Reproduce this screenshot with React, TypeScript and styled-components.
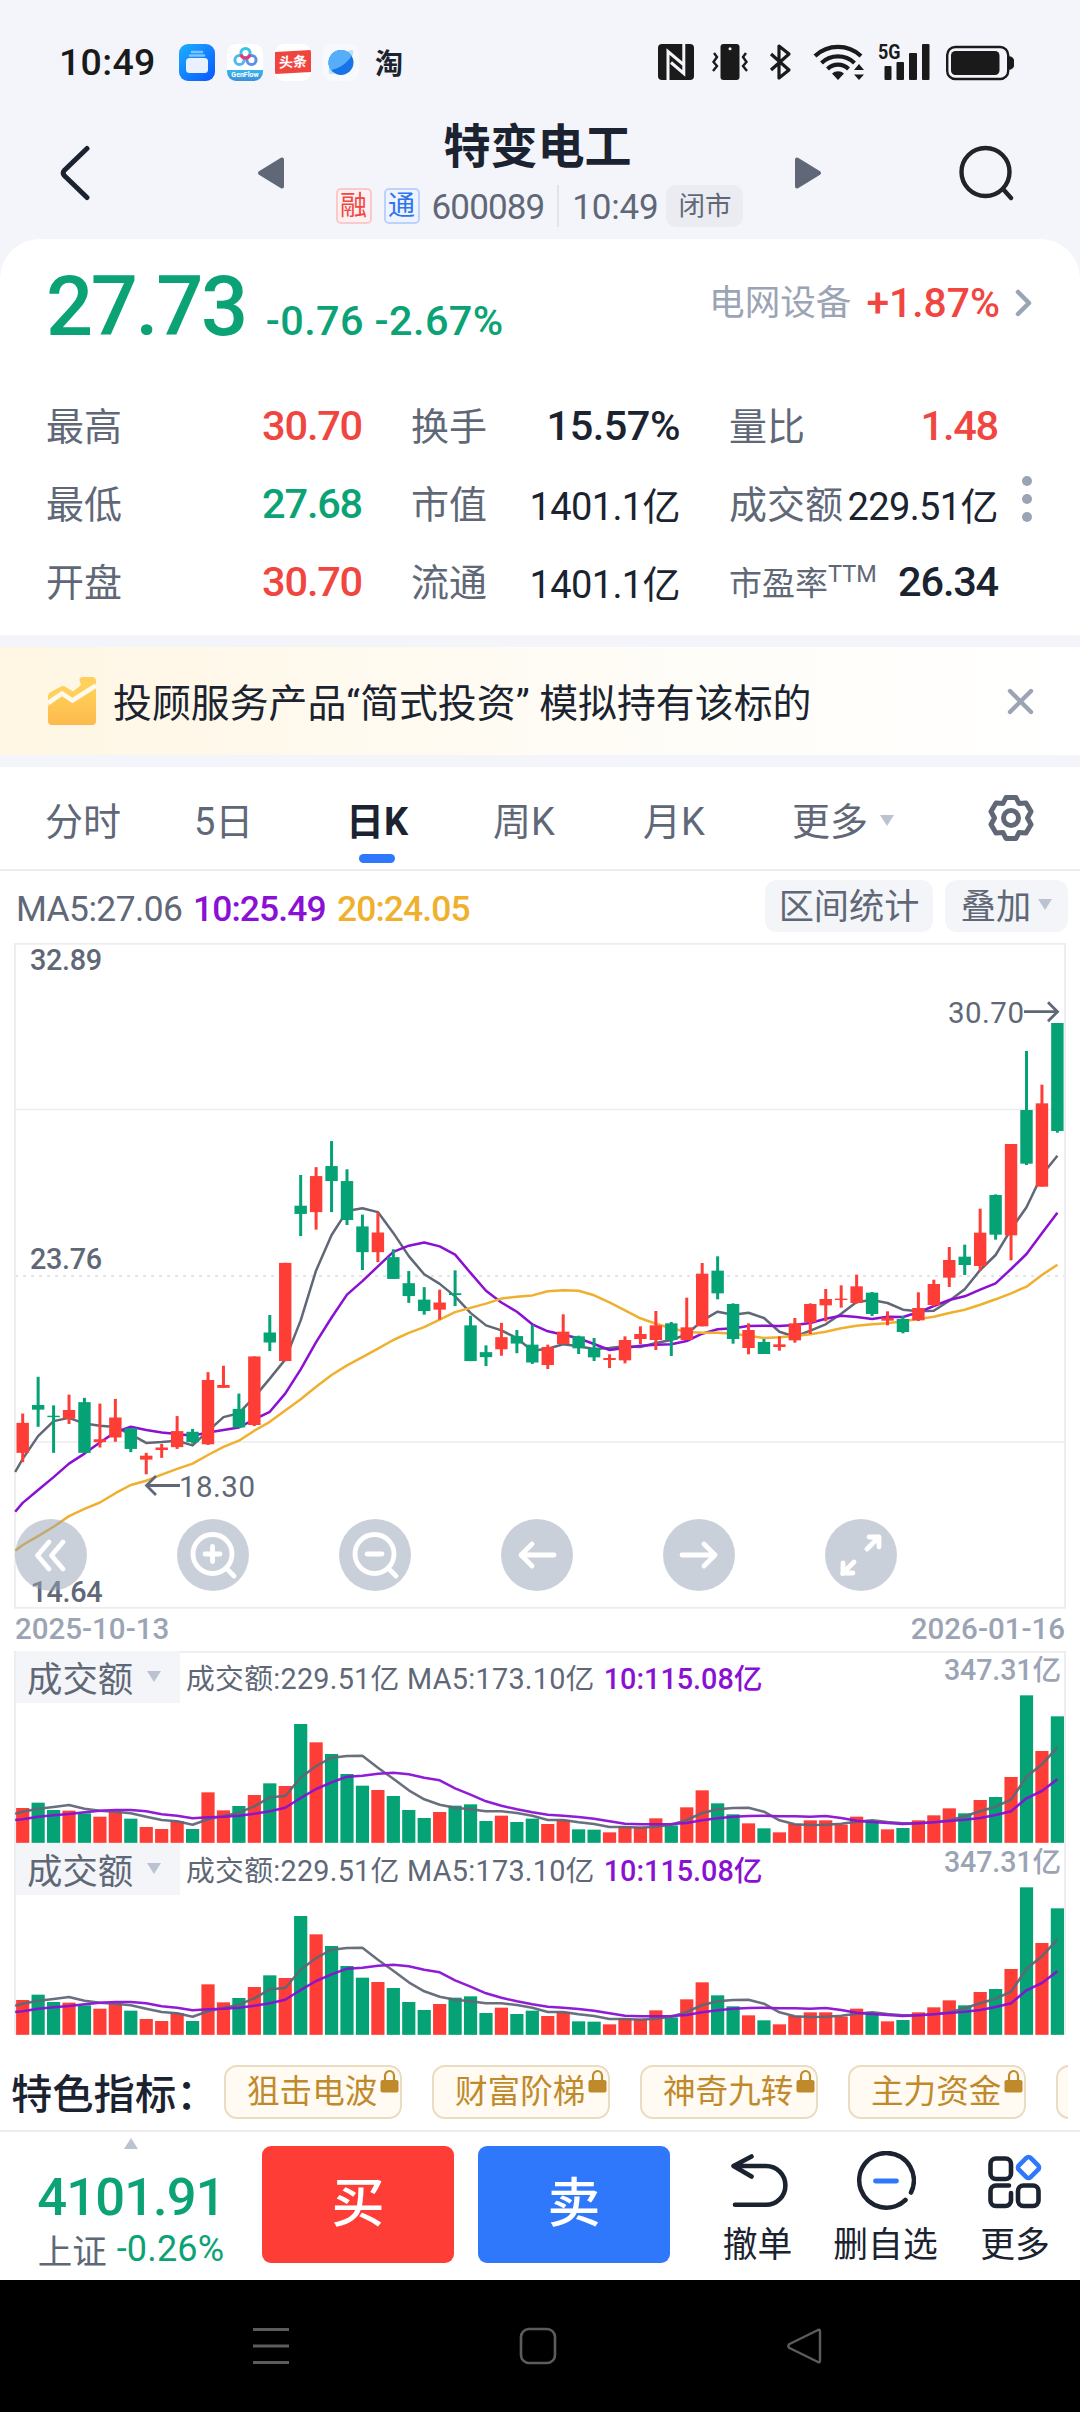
import React from 'react';
import styled, { createGlobalStyle } from 'styled-components';

const C = {
  ink: '#1b2330',
  sub: '#606877',
  mute: '#9ba4b5',
  up: '#ff3d37',
  upText: '#f0463f',
  down: '#04a275',
  downText: '#0ba276',
  purple: '#8a10d4',
  amber: '#efb02e',
  blue: '#2f78fb',
  line: '#ededef',
  page: '#f4f5fa',
  gold: '#bf8a2c',
};

const Global = createGlobalStyle`
  * { box-sizing: border-box; }
  body {
    margin: 0;
    background: #000;
    font-family: Roboto, "Noto Sans CJK SC", sans-serif;
    color: ${C.ink};
  }
  svg { display: block; flex: none; }
`;

const Screen = styled.div`
  width: 1080px;
  height: 2412px;
  display: flex;
  flex-direction: column;
  background: ${C.page};
  overflow: hidden;
  white-space: nowrap;
`;

const Txt = styled.span<{ $s: number; $c?: string; $w?: number; $ls?: number }>`
  font-size: ${p => p.$s}px;
  color: ${p => p.$c ?? C.ink};
  font-weight: ${p => p.$w ?? 400};
  letter-spacing: ${p => p.$ls ?? 0}px;
`;

/* ---------- status bar ---------- */

const StatusBar = styled.header`
  height: 124px;
  flex: none;
  display: flex;
  align-items: center;
  padding: 0 66px 0 59px;
`;
const Clock = styled.span`
  width: 120px;
  font-size: 37.5px;
  font-weight: 500;
  letter-spacing: 0.3px;
  color: #1a1a1a;
`;
const AppIcons = styled.div`
  display: flex;
  gap: 12px;
  align-items: center;
`;
const AppTile = styled.div<{ $bg?: string }>`
  width: 36px;
  height: 37px;
  border-radius: 9px;
  overflow: hidden;
  background: ${p => p.$bg ?? 'transparent'};
  display: flex;
  flex-direction: column;
  align-items: center;
  justify-content: center;
`;
const Ribbon = styled.div`
  width: 36px;
  height: 22px;
  background: #f0443f;
  color: #fff;
  font-size: 14px;
  font-weight: 700;
  line-height: 22px;
  text-align: center;
  transform: skewY(-3deg);
`;
const FlowLabel = styled.div`
  width: 36px;
  height: 11px;
  background: linear-gradient(#35b6ee, #3f8fd9);
  color: #fff;
  font-size: 7px;
  font-weight: 700;
  line-height: 11px;
  text-align: center;
`;
const TaoMark = styled.span`
  margin-left: 4px;
  font-size: 28px;
  font-weight: 700;
`;
const SysIcons = styled.div`
  margin-left: auto;
  display: flex;
  align-items: center;
`;

const SystemGlyphs = () => (
  <svg width="356" height="64" viewBox="658 30 356 64">
    <g fill="#1a1a1a">
      <rect x="658" y="44" width="36" height="36" rx="4" />
      <path d="M668 80V51.500L684 65M683.800 44V73.500L671 62.500" fill="none" stroke="#f4f5fa" strokeWidth="3" />
      <rect x="720.500" y="44" width="19" height="36" rx="3" />
      <circle cx="730" cy="48.800" r="1.500" fill="#f4f5fa" />
      <path d="M714 53l3 4-3.500 5 3.500 4-4 5M746 53l-3 4 3.500 5-3.500 4 4 5" fill="none" stroke="#1a1a1a" strokeWidth="2.400" />
      <path d="M771 54l18 16-10 8V46l10 8-18 16" fill="none" stroke="#1a1a1a" strokeWidth="3.200" strokeLinejoin="round" />
      <g fill="none" stroke="#1a1a1a" strokeWidth="4.200">
        <path d="M815 56a33.500 33.500 0 0 1 46 0" />
        <path d="M821.500 63a24 24 0 0 1 33 0" />
        <path d="M827.500 69a15 15 0 0 1 21 0" />
      </g>
      <path d="M832 73.500a9 9 0 0 1 12 0L838 80z" />
      <path d="M854 70l5-6 5 6zM854 74.500l5 5.500 5-5.500z" />
      <rect x="884.500" y="66" width="7" height="14" rx="1" />
      <rect x="896.500" y="62" width="7.500" height="18" rx="1" />
      <rect x="909" y="53" width="8" height="27" rx="1" />
      <rect x="922" y="44" width="7.500" height="36" rx="1" />
      <text x="878" y="58.500" fontSize="20" fontWeight="700" fontFamily="Roboto, sans-serif" textLength="22.500" lengthAdjust="spacingAndGlyphs">5G</text>
      <rect x="947.200" y="47" width="61" height="32" rx="8" fill="none" stroke="#1a1a1a" strokeWidth="2.400" />
      <rect x="951" y="51" width="48.500" height="24" rx="4.500" />
      <path d="M1009.500 57a4 5.500 0 0 1 0 12z" stroke="#1a1a1a" strokeWidth="1.500" />
    </g>
  </svg>
);

/* ---------- title bar ---------- */

const TitleBar = styled.div`
  height: 115px;
  flex: none;
  display: flex;
  align-items: flex-start;
  padding: 0 66px 0 60px;
`;
const NavSlot = styled.div<{ $gapRight?: number }>`
  height: 98px;
  display: flex;
  align-items: center;
  margin-right: ${p => p.$gapRight ?? 0}px;
`;
const TitleCol = styled.div`
  flex: 1;
  display: flex;
  flex-direction: column;
  align-items: center;
`;
const Title = styled.h1`
  margin: -1px 4px 0 0;
  font-size: 47px;
  line-height: 47px;
  font-weight: 700;
`;
const SubRow = styled.div`
  margin-top: 15px;
  height: 42px;
  display: flex;
  align-items: center;
`;
const Mark = styled.span<{ $c: string; $edge: string; $bg: string }>`
  width: 36px;
  height: 36px;
  margin-right: 12px;
  border: 2px solid ${p => p.$edge};
  border-radius: 5px;
  background: ${p => p.$bg};
  color: ${p => p.$c};
  font-size: 27px;
  line-height: 32px;
  text-align: center;
`;
const SubNum = styled.span<{ $ls: number }>`
  padding-top: 3px;
  color: ${C.sub};
  font-size: 35px;
  letter-spacing: ${p => p.$ls}px;
`;
const Divider = styled.i`
  width: 2px;
  height: 42px;
  margin: 0 13px 0 13px;
  background: #e2e4ea;
`;
const StatePill = styled.span`
  width: 77px;
  height: 42px;
  margin-left: 8px;
  border-radius: 10px;
  background: #ebecf1;
  color: ${C.sub};
  font-size: 26.500px;
  line-height: 42px;
  text-align: center;
`;

/* ---------- quote card ---------- */

const Card = styled.section`
  height: 396px;
  flex: none;
  padding: 28px 48px 0 46px;
  background: #fff;
  border-radius: 40px 40px 0 0;
`;
const PriceRow = styled.div`
  height: 80px;
  display: flex;
  align-items: baseline;
  line-height: 80px;
`;
const Change = styled.div`
  margin-left: 20px;
`;
const Sector = styled.div`
  margin-left: auto;
  align-self: flex-start;
  display: flex;
  align-items: center;
  line-height: 72px;
  gap: 15px;
`;
const StatGrid = styled.div`
  margin-top: 39px;
  display: flex;
`;
const StatCol = styled.div<{ $w: number; $gap: number }>`
  width: ${p => p.$w}px;
  margin-right: ${p => p.$gap}px;
`;
const StatLine = styled.div`
  height: 78px;
  display: flex;
  justify-content: space-between;
  align-items: center;
`;
const StatLabel = styled.span<{ $small?: boolean }>`
  padding-bottom: ${p => (p.$small ? 1 : 4)}px;
  color: ${C.sub};
  font-size: ${p => (p.$small ? 33 : 38)}px;
`;
const Sup = styled.sup`
  font-size: 23.5px;
  line-height: 0;
  vertical-align: 13px;
`;
const Dots = styled.div`
  align-self: center;
  display: flex;
  flex-direction: column;
  gap: 8px;
  margin-bottom: 8px;
`;
const Dot = styled.i`
  width: 10px;
  height: 10px;
  border-radius: 50%;
  background: ${C.mute};
`;

type Stat = [string, string, string, boolean?];
const statCols: { w: number; gap: number; rows: Stat[] }[] = [
  { w: 316, gap: 49, rows: [['最高', '30.70', C.upText], ['最低', '27.68', C.downText], ['开盘', '30.70', C.upText]] },
  { w: 269, gap: 49, rows: [['换手', '15.57%', C.ink], ['市值', '1401.1亿', C.ink], ['流通', '1401.1亿', C.ink]] },
  { w: 269, gap: 24, rows: [['量比', '1.48', C.upText], ['成交额', '229.51亿', C.ink], ['市盈率', '26.34', C.ink, true]] },
];

const StatItem = ({ row }: { row: Stat }) => {
  const [label, value, color, ttm] = row;
  const wide = value.endsWith('亿');
  return (
    <StatLine>
      <StatLabel $small={ttm}>
        {label}
        {ttm && <Sup>TTM</Sup>}
      </StatLabel>
      <Txt $s={wide ? 38 : 41.5} $w={wide ? 400 : 500} $c={color} $ls={wide ? -0.6 : value.endsWith('%') ? -0.5 : -1.2}>
        {value}
      </Txt>
    </StatLine>
  );
};

/* ---------- banner ---------- */

const Banner = styled.section`
  height: 108px;
  flex: none;
  margin: 12px 0;
  padding: 0 46px 0 48px;
  display: flex;
  align-items: center;
  background: linear-gradient(90deg, #fff6e3, #fffcf5 50%, #fff);
`;
const BannerText = styled.p`
  flex: 1;
  margin: -3px 0 0 17px;
  font-size: 38.9px;
`;

/* ---------- tabs ---------- */

const Tabs = styled.nav`
  height: 104px;
  flex: none;
  display: flex;
  align-items: center;
  padding: 7px 44px 0 45px;
  background: #fff;
  border-bottom: 2px solid ${C.line};
`;
const Tab = styled.div<{ $w: number; $on?: boolean }>`
  position: relative;
  width: ${p => p.$w}px;
  display: flex;
  align-items: center;
  font-size: 38px;
  line-height: 50px;
  color: ${p => (p.$on ? C.ink : C.sub)};
  font-weight: ${p => (p.$on ? 700 : 400)};
  &::after {
    content: '';
    display: ${p => (p.$on ? 'block' : 'none')};
    position: absolute;
    left: 13px;
    top: 57px;
    width: 36px;
    height: 9px;
    border-radius: 4.5px;
    background: ${C.blue};
  }
`;
const Gear = styled.svg`
  margin-top: -8px;
`;
const Caret = styled.i<{ $up?: boolean; $ml?: number; $mt?: number }>`
  width: 0;
  height: 0;
  margin-left: ${p => p.$ml ?? 0}px;
  margin-top: ${p => p.$mt ?? 0}px;
  border: 7px solid transparent;
  border-${p => (p.$up ? 'top' : 'bottom')}-width: 0;
  border-${p => (p.$up ? 'bottom' : 'top')}: 11px solid #bcc3d0;
`;

/* ---------- chart ---------- */

const ChartArea = styled.section`
  flex: none;
  background: #fff;
`;
const MaRow = styled.div`
  height: 72px;
  display: flex;
  align-items: center;
  padding: 0 12px 2px 16px;
  font-size: 35.4px;
`;
const MaItem = styled.span<{ $c: string; $w?: number; $ls: number; $box: number }>`
  width: ${p => p.$box}px;
  padding-top: 5px;
  color: ${p => p.$c};
  font-weight: ${p => p.$w ?? 500};
  letter-spacing: ${p => p.$ls}px;
`;
const ToolBtn = styled.button<{ $w: number; $push?: boolean }>`
  width: ${p => p.$w}px;
  height: 52px;
  margin-left: ${p => (p.$push ? 'auto' : '12px')};
  padding: 2px 0 0;
  display: flex;
  align-items: center;
  justify-content: center;
  border: 0;
  border-radius: 12px;
  background: #f4f5f8;
  color: ${C.sub};
  font: 400 35.2px/50px Roboto, 'Noto Sans CJK SC', sans-serif;
`;
const KlineBox = styled.div`
  position: relative;
  height: 666px;
`;
const Controls = styled.div`
  position: absolute;
  left: 15px;
  bottom: 18px;
  display: flex;
  gap: 90px;
`;
const RoundBtn = styled.div`
  width: 72px;
  height: 72px;
  border-radius: 50%;
  background: rgba(150, 161, 181, 0.5);
`;
const DateRow = styled.div`
  height: 42px;
  padding: 0 15px 3px 15px;
  display: flex;
  justify-content: space-between;
  align-items: center;
  font-size: 29.5px;
  letter-spacing: 0;
  color: ${C.mute};
  font-weight: 500;
`;
const VolBox = styled.div`
  position: relative;
  height: 192px;
  display: flex;
  align-items: flex-start;
  padding-left: 16px;
`;
const VolSvg = styled.svg`
  position: absolute;
  left: 0;
  top: 0;
`;
const VolPick = styled.div`
  position: relative;
  width: 164px;
  height: 52px;
  padding: 0 0 2px 11px;
  display: flex;
  align-items: center;
  background: #f4f5f8;
  color: ${C.sub};
  font-size: 35.4px;
`;
const VolText = styled.div`
  position: relative;
  margin-left: 6px;
  line-height: 57px;
  display: flex;
  gap: 9px;
`;
const VolMax = styled.div`
  position: relative;
  margin: -2px 19px 0 auto;
  line-height: 43px;
`;

const X0 = 22.7;
const STEP = 15.443;
const HALF = 34;
const cx = (i: number) => X0 + STEP * i;

/* direction, high, body top, body bottom, low; the two halves use their own units per pixel */
type Bar = [0 | 1, number, number, number, number];
const bars: Bar[] = [
  [1, 1326, 1352, 1436, 1462], [0, 1223, 1302, 1315, 1363], [0, 1303, 1332, 1336, 1436], [1, 1273, 1316, 1340, 1355],
  [0, 1282, 1294, 1436, 1436], [1, 1298, 1398, 1406, 1421], [1, 1285, 1337, 1393, 1405], [0, 1367, 1367, 1425, 1434],
  [1, 1436, 1444, 1455, 1496], [1, 1411, 1421, 1428, 1450], [1, 1333, 1375, 1420, 1425], [0, 1369, 1377, 1406, 1410],
  [1, 1210, 1232, 1412, 1414], [1, 1192, 1246, 1254, 1254], [0, 1270, 1313, 1365, 1365], [1, 1166, 1166, 1358, 1361],
  [0, 1050, 1099, 1127, 1151], [1, 904, 904, 1179, 1179], [0, 658, 744, 767, 829], [1, 636, 661, 762, 811],
  [0, 563, 633, 675, 762], [0, 642, 675, 784, 798], [0, 769, 802, 874, 924], [1, 763, 819, 874, 902],
  [0, 866, 888, 949, 949], [0, 927, 961, 997, 1016], [0, 972, 1007, 1039, 1049], [1, 979, 1015, 1035, 1063],
  [0, 925, 989, 994, 1025], [0, 1052, 1079, 1179, 1179], [0, 1135, 1154, 1168, 1193], [1, 1072, 1112, 1146, 1164],
  [0, 1092, 1109, 1130, 1157], [0, 1078, 1133, 1183, 1187],
  [1, 1214, 1221, 1275, 1287], [1, 1123, 1175, 1212, 1212], [0, 1187, 1189, 1225, 1242], [0, 1194, 1225, 1252, 1263],
  [1, 1243, 1254, 1260, 1284], [1, 1189, 1200, 1261, 1270], [1, 1159, 1182, 1197, 1212], [1, 1113, 1156, 1200, 1230],
  [0, 1146, 1150, 1200, 1248], [1, 1073, 1162, 1200, 1200], [1, 969, 1001, 1159, 1159], [0, 949, 992, 1060, 1078],
  [0, 1090, 1092, 1197, 1211], [1, 1150, 1170, 1224, 1243], [0, 1197, 1206, 1242, 1242], [1, 1189, 1213, 1221, 1232],
  [1, 1134, 1150, 1201, 1208], [1, 1090, 1092, 1147, 1182], [1, 1047, 1077, 1096, 1144], [1, 1036, 1076, 1080, 1103],
  [1, 1004, 1039, 1089, 1091], [0, 1056, 1058, 1122, 1128], [1, 1114, 1133, 1142, 1156], [0, 1128, 1137, 1176, 1180],
  [1, 1057, 1104, 1141, 1143], [1, 1019, 1032, 1095, 1099], [1, 921, 960, 1013, 1041], [0, 914, 950, 975, 1005],
  [1, 806, 878, 978, 992], [0, 763, 765, 884, 899], [1, 612, 612, 886, 961], [0, 333, 510, 671, 675],
  [1, 434, 490, 740, 740], [0, 249, 249, 573, 578],
];
const priceY = (v: number, i: number) => v / (i < HALF ? 2.8 : 3) - 3;

const ma5 = [
  1453, 1389, 1347, 1338, 1354, 1360, 1364, 1384, 1408, 1406, 1402, 1415, 1375, 1336, 1325, 1280, 1228, 1175, 1065, 925, 826, 759, 751, 762,
  820, 885, 936, 963, 998, 1044, 1079, 1093, 1115, 1150,
  1226, 1213, 1219, 1227, 1224, 1219, 1221, 1209, 1200, 1183, 1142, 1115, 1124, 1118, 1134, 1175, 1190, 1172, 1153, 1121, 1086, 1080, 1089,
  1109, 1114, 1112, 1082, 1048, 990, 945, 868, 802, 705, 647,
];
const ma10 = [
  1576, 1540, 1504, 1466, 1438, 1407, 1378, 1363, 1372, 1379, 1383, 1388, 1379, 1372, 1365, 1342, 1321, 1270, 1202, 1126, 1057, 993, 955,
  914, 873, 856, 847, 858, 881, 932, 982, 1015, 1041, 1076,
  1174, 1184, 1195, 1212, 1230, 1224, 1217, 1214, 1213, 1203, 1181, 1168, 1165, 1158, 1157, 1158, 1155, 1149, 1136, 1127, 1131, 1137, 1130,
  1131, 1117, 1098, 1080, 1069, 1049, 1030, 987, 942, 880, 818,
];
const ma20 = [
  1694, 1669, 1643, 1613, 1593, 1575, 1549, 1526, 1514, 1497, 1481, 1466, 1442, 1419, 1402, 1374, 1349, 1317, 1286, 1251, 1218, 1191, 1168,
  1144, 1120, 1100, 1084, 1063, 1042, 1030, 1018, 1004, 999, 995,
  1054, 1051, 1052, 1066, 1087, 1111, 1135, 1151, 1165, 1176, 1178, 1178, 1181, 1187, 1194, 1192, 1188, 1183, 1175, 1165, 1157, 1153, 1150,
  1144, 1137, 1130, 1119, 1109, 1094, 1078, 1060, 1040, 1005, 974,
];
const volume = [
  504, 488, 510, 512, 520, 530, 516, 536, 561, 567, 543, 567, 457, 511, 498, 465, 430, 438, 252, 307, 342, 402, 437, 450, 468, 510, 534, 516,
  497, 493, 543, 527, 546, 536,
  552, 540, 568, 569, 577, 559, 560, 535, 556, 502, 451, 490, 523, 550, 565, 577, 552, 541, 541, 554, 530, 541, 568, 564, 541, 526, 505, 520,
  480, 471, 411, 166, 333, 229,
];
const vma5 = [
  515, 506, 501, 495, 506, 512, 515, 520, 530, 540, 544, 554, 538, 528, 518, 499, 472, 468, 413, 378, 353, 348, 347, 383, 416, 451, 478, 494,
  503, 508, 514, 514, 519, 527, 540, 540, 547, 552, 561, 561, 563, 560, 554, 540, 519, 508, 504, 503, 515, 541, 553, 555, 554, 551, 545, 541,
  546, 550, 550, 547, 541, 529, 514, 500, 479, 410, 373, 322,
];
const vma10 = [
  538, 530, 526, 522, 517, 512, 510, 510, 514, 523, 527, 535, 532, 530, 527, 521, 514, 503, 474, 447, 427, 410, 407, 401, 398, 403, 413, 421,
  445, 464, 484, 497, 508, 517, 524, 527, 531, 536, 544, 551, 553, 553, 552, 549, 541, 535, 530, 528, 527, 529, 529, 530, 528, 534, 542, 546,
  549, 552, 550, 547, 543, 539, 534, 525, 514, 475, 453, 418,
];

const volY = (v: number) => v / 3 - 11;
const trace = (vals: number[], y: (v: number, i: number) => number, start: number) =>
  [`15.2,${start}`, ...vals.map((v, i) => `${cx(i).toFixed(1)},${y(v, i).toFixed(1)}`)].join(' ');

const Kline = () => (
  <svg width="1080" height="666" viewBox="0 0 1080 666" fill="none">
    <path d="M15 166.500H1065M15 499H1065" stroke={C.line} strokeWidth="1.500" />
    <path d="M15 333H1065" stroke="#d9dbe0" strokeWidth="1.500" strokeDasharray="3 5" />
    <rect x="15" y="0.750" width="1050" height="664" stroke={C.line} strokeWidth="1.800" />
    <g strokeWidth="2.500" strokeLinejoin="round">
      <polyline points={trace(ma5, priceY, 529)} stroke={C.sub} />
      <polyline points={trace(ma10, priceY, 568.7)} stroke={C.purple} />
      <polyline points={trace(ma20, priceY, 607.7)} stroke={C.amber} />
    </g>
    {bars.map(([up, h, t, b, l], i) => (
      <g key={i} fill={up ? C.up : C.down}>
        <rect x={cx(i) - 1.5} y={priceY(h, i)} width="3" height={priceY(l, i) - priceY(h, i)} />
        <rect x={cx(i) - 6.2} y={priceY(t, i)} width="12.4" height={priceY(b, i) - priceY(t, i)} />
      </g>
    ))}
    <g stroke={C.sub} strokeWidth="2.800">
      <path d="M180 542.500H147M156 533l-9.500 9.500 9.500 9.500" />
      <path d="M1024 68.700H1057M1048 59.200l9.500 9.500-9.500 9.500" />
    </g>
    <g fill={C.sub} fontFamily="Roboto, sans-serif">
      <g fontSize="28.800" fontWeight="500">
        <text x="30" y="27" textLength="72">32.89</text>
        <text x="30" y="326" textLength="72">23.76</text>
        <text x="30.500" y="659" textLength="72">14.64</text>
      </g>
      <g fontSize="29.500">
        <text x="179" y="554" textLength="76">18.30</text>
        <text x="948" y="80" textLength="76">30.70</text>
      </g>
    </g>
  </svg>
);

const controlPaths = [
  'M34 23L22.500 36.500 34 50M48 23L36.500 36.500 48 50',
  'M35.500 15.500a19.500 19.500 0 1 0 0 39 19.500 19.500 0 1 0 0-39M49 49l8 8M28 35h15M35.500 27.500v15',
  'M35.500 15.500a19.500 19.500 0 1 0 0 39 19.500 19.500 0 1 0 0-39M49 49l8 8M28 35h15',
  'M53 36H20M31 25L20 36 31 47',
  'M19 36H52M41 25L52 36 41 47',
  'M42 30L53.500 18.500M44 18H54V28M29 43L17.500 54.500M18 44V54H28',
];

const Volume = ({ framed }: { framed?: boolean }) => (
  <VolBox>
    <VolSvg width="1080" height="192" viewBox="0 0 1080 192" fill="none">
      <path d={`M15 192V${framed ? '0.75H1065' : '0M1065 0'}V192`} stroke={C.line} strokeWidth="1.8" />
      {volume.map((v, i) => (
        <rect key={i} x={cx(i) - 6.6} y={volY(v)} width="13.2" height={volY(608.5) - volY(v)} fill={bars[i][0] ? C.up : C.down} />
      ))}
      <g strokeWidth="2.500" strokeLinejoin="round" opacity="0.95">
        <polyline points={trace(vma5, volY, 162.7)} stroke={C.sub} />
        <polyline points={trace(vma10, volY, 169)} stroke={C.purple} />
      </g>
    </VolSvg>
    <VolPick>
      成交额
      <Caret $ml={14} />
    </VolPick>
    <VolText>
      <Txt $s={28.8} $c={C.sub} $ls={0.27}>成交额:229.51亿 MA5:173.10亿</Txt>
      <Txt $s={28.8} $c={C.purple} $w={500}>10:115.08亿</Txt>
    </VolText>
    <VolMax>
      <Txt $s={28.6} $c={C.mute} $w={500} $ls={-0.1}>347.31亿</Txt>
    </VolMax>
  </VolBox>
);

/* ---------- indicator chips ---------- */

const ChipRow = styled.section`
  height: 97px;
  flex: none;
  display: flex;
  align-items: center;
  padding: 19px 12px 0 11px;
  background: #fff;
  border-bottom: 2px solid ${C.line};
`;
const ChipLabel = styled.span`
  width: 213px;
  flex: none;
  margin-top: -2px;
  font-size: 41.3px;
  font-weight: 500;
`;
const ChipList = styled.div`
  flex: 1;
  display: flex;
  gap: 30px;
  overflow: hidden;
`;
const Chip = styled.div`
  width: 178px;
  height: 54px;
  flex: none;
  display: flex;
  padding-left: 21px;
  border: 2px solid #eadcc2;
  border-radius: 13px;
  background: #fffaf2;
  color: ${C.gold};
  font-size: 32.6px;
  line-height: 50px;
`;
const LockSvg = styled.svg`
  margin: 2px 0 0 3px;
`;

const Lock = () => (
  <LockSvg width="20" height="24" viewBox="0 0 20 24">
    <path d="M5 11V7a4.500 5 0 0 1 9 0v4" fill="none" stroke={C.gold} strokeWidth="2.200" />
    <rect x="0.500" y="11" width="18" height="12.500" rx="2" fill={C.gold} />
  </LockSvg>
);

/* ---------- trade bar ---------- */

const TradeBar = styled.footer`
  height: 148px;
  flex: none;
  display: flex;
  background: #fff;
`;
const IndexBox = styled.div`
  width: 262px;
  display: flex;
  flex-direction: column;
  align-items: center;
`;
const IndexValue = styled.div`
  margin: 11px 0 0 0;
  height: 75px;
  font-size: 52.5px;
  line-height: 75px;
  font-weight: 500;
  letter-spacing: -0.9px;
  color: ${C.downText};
`;
const IndexSub = styled.div`
  display: flex;
  align-items: center;
  gap: 10px;
  height: 36px;
  margin-top: -4px;
`;
const TradeBtn = styled.button<{ $bg: string }>`
  width: 192px;
  height: 117px;
  margin: 14px 24px 0 0;
  padding: 0;
  border: 0;
  border-radius: 9px;
  background: ${p => p.$bg};
  color: #fff;
  font: 500 53px/117px Roboto, 'Noto Sans CJK SC', sans-serif;
`;
const Action = styled.div<{ $w: number }>`
  width: ${p => p.$w}px;
  padding-top: 19px;
  display: flex;
  flex-direction: column;
  align-items: center;
  font-size: 34.8px;
  line-height: 44px;
  & > svg {
    margin-bottom: 12px;
  }
`;

/* ---------- system navigation ---------- */

const SysNav = styled.div`
  flex: 1;
  display: flex;
  align-items: flex-start;
  padding: 47px 256px 0 252px;
  justify-content: space-between;
  background: #000;
`;

export default function App() {
  return (
    <Screen>
      <Global />
      <StatusBar>
        <Clock>10:49</Clock>
        <AppIcons>
          <AppTile $bg="linear-gradient(135deg,#1cb0ff,#0a55ff)">
            <svg width="36" height="37" viewBox="0 0 36 37">
              <path d="M13 8h10M11 11.500h14" stroke="#7cc4ff" strokeWidth="2.500" strokeLinecap="round" />
              <rect x="7" y="14" width="22" height="15" rx="3.500" fill="#e9f1ff" />
            </svg>
          </AppTile>
          <AppTile $bg="#fff">
            <svg width="36" height="26" viewBox="0 0 36 26" fill="none" strokeWidth="3">
              <circle cx="12.500" cy="16" r="4.600" stroke="#52b7ee" />
              <circle cx="24.500" cy="16" r="4.600" stroke="#5b8fe8" />
              <circle cx="18.500" cy="9" r="4.600" stroke="#35c3e6" />
              <path d="M14 10.500a4.600 4.600 0 0 0 9 0" stroke="#e83a78" />
            </svg>
            <FlowLabel>GenFlow</FlowLabel>
          </AppTile>
          <AppTile $bg="#fff">
            <Ribbon>头条</Ribbon>
          </AppTile>
          <AppTile $bg="#f8f9fc">
            <svg width="36" height="37" viewBox="0 0 36 37">
              <path d="M6 25C4 33 12 31 20 24S33 7 29 6 6 18 6 25z" fill="#b9e0ff" />
              <circle cx="18" cy="18.500" r="12.500" fill="#1673e8" />
              <path d="M18 6A12.500 12.500 0 0 0 8 26C17 25 26 17 28.500 11.500A12.500 12.500 0 0 0 18 6z" fill="#56aefb" />
            </svg>
          </AppTile>
          <TaoMark>淘</TaoMark>
        </AppIcons>
        <SysIcons>
          <SystemGlyphs />
        </SysIcons>
      </StatusBar>

      <TitleBar>
        <NavSlot $gapRight={166}>
          <svg width="30" height="56" viewBox="0 0 30 56" fill="none" stroke={C.ink} strokeWidth="5" strokeLinecap="round" strokeLinejoin="round">
            <path d="M27 3.500L4.200 25.500Q2.200 28 4.200 30.500L27 52.500" />
          </svg>
        </NavSlot>
        <NavSlot>
          <svg width="29" height="34" viewBox="0 0 29 34" fill={C.sub} stroke={C.sub} strokeWidth="4" strokeLinejoin="round">
            <path d="M26 3.500V30.500L4 17z" />
          </svg>
        </NavSlot>
        <TitleCol>
          <Title>特变电工</Title>
          <SubRow>
            <Mark $c="#f0463f" $edge="#fac9c9" $bg="#fdf0f2">融</Mark>
            <Mark $c="#2f74ea" $edge="#bcd2f8" $bg="#eef4ff">通</Mark>
            <SubNum $ls={-0.9}>600089</SubNum>
            <Divider />
            <SubNum $ls={-0.2}>10:49</SubNum>
            <StatePill>闭市</StatePill>
          </SubRow>
        </TitleCol>
        <NavSlot $gapRight={135}>
          <svg width="29" height="34" viewBox="0 0 29 34" fill={C.sub} stroke={C.sub} strokeWidth="4" strokeLinejoin="round">
            <path d="M3 3.500V30.500L25 17z" />
          </svg>
        </NavSlot>
        <NavSlot>
          <svg width="56" height="56" viewBox="0 0 56 56" fill="none" stroke="#222326" strokeWidth="4.400" strokeLinecap="round">
            <circle cx="27.500" cy="27" r="24" />
            <path d="M45 44L53 53" />
          </svg>
        </NavSlot>
      </TitleBar>

      <Card>
        <PriceRow>
          <Txt $s={83} $w={500} $c={C.downText} $ls={-2.4}>27.73</Txt>
          <Change>
            <Txt $s={41.4} $w={500} $c={C.downText} $ls={0.4}>-0.76 -2.67%</Txt>
          </Change>
          <Sector>
            <Txt $s={35.6} $c={C.mute}>电网设备</Txt>
            <Txt $s={40.8} $w={500} $c={C.upText}>+1.87%</Txt>
            <svg width="17" height="28" viewBox="0 0 17 28" fill="none" stroke={C.mute} strokeWidth="4.500" strokeLinecap="round" strokeLinejoin="round">
              <path d="M3 3l11 11L3 25" />
            </svg>
          </Sector>
        </PriceRow>
        <StatGrid>
          {statCols.map((col, i) => (
            <StatCol key={i} $w={col.w} $gap={col.gap}>
              {col.rows.map(r => <StatItem key={r[0]} row={r} />)}
            </StatCol>
          ))}
          <Dots><Dot /><Dot /><Dot /></Dots>
        </StatGrid>
      </Card>

      <Banner>
        <svg width="48" height="48" viewBox="0 0 48 48">
          <defs>
            <linearGradient id="gold" x1="0" y1="0" x2="0" y2="1">
              <stop offset="0" stopColor="#ffd257" />
              <stop offset="1" stopColor="#fdb94e" />
            </linearGradient>
          </defs>
          <path d="M0 29L14 19l10 6L48 10V44a4 4 0 0 1-4 4H4a4 4 0 0 1-4-4z" fill="url(#gold)" />
          <path d="M0 19Q0 17 2 15.500L13 9.500Q15 8.500 17 9.500L25 14.500 33 8 31.500 3.500Q31 0 35 0H44Q48 0 48 4V8L25 26 14 19 0 28z" fill="#ffd05c" />
          <path d="M0 26L14 16.500l10.500 7L48 8.500" fill="none" stroke="#fffaf0" strokeWidth="4.500" />
        </svg>
        <BannerText>投顾服务产品“简式投资” 模拟持有该标的</BannerText>
        <svg width="27" height="27" viewBox="0 0 27 27" stroke={C.mute} strokeWidth="4.400" strokeLinecap="round">
          <path d="M3 3l21 21M24 3L3 24" />
        </svg>
      </Banner>

      <Tabs>
        <Tab $w={149}>分时</Tab>
        <Tab $w={152}>5日</Tab>
        <Tab $w={147} $on>日K</Tab>
        <Tab $w={150}>周K</Tab>
        <Tab $w={149}>月K</Tab>
        <Tab $w={194}>更多<Caret $ml={12} $mt={-3} /></Tab>
        <Gear width="50" height="50" viewBox="0 0 50 50" fill="none" stroke={C.sub} strokeWidth="5" strokeLinejoin="round">
          <path d="M20 4.500h10l3 6 7-.5 5 8.500-3.500 6.500 3.500 6.500-5 8.500-7-.5-3 6H20l-3-6-7 .5-5-8.500L8.500 25 5 18.500 10 10l7 .5z" />
          <circle cx="25" cy="25" r="7.500" />
        </Gear>
      </Tabs>

      <ChartArea>
        <MaRow>
          <MaItem $c={C.sub} $w={400} $ls={-0.6} $box={177}>MA5:27.06</MaItem>
          <MaItem $c={C.purple} $ls={-0.9} $box={144}>10:25.49</MaItem>
          <MaItem $c={C.amber} $ls={-0.9} $box={140}>20:24.05</MaItem>
          <ToolBtn $w={168} $push>区间统计</ToolBtn>
          <ToolBtn $w={123}>叠加<Caret $ml={7} $mt={-6} /></ToolBtn>
        </MaRow>
        <KlineBox>
          <Kline />
          <Controls>
            {controlPaths.map((d, i) => (
              <RoundBtn key={i}>
                <svg width="72" height="72" viewBox="0 0 72 72" fill="none" stroke="#fff" strokeWidth="4.800" strokeLinecap="round" strokeLinejoin="round">
                  <path d={d} />
                </svg>
              </RoundBtn>
            ))}
          </Controls>
        </KlineBox>
        <DateRow>
          <span>2025-10-13</span>
          <span>2026-01-16</span>
        </DateRow>
        <Volume framed />
        <Volume />
      </ChartArea>

      <ChipRow>
        <ChipLabel>特色指标：</ChipLabel>
        <ChipList>
          {['狙击电波', '财富阶梯', '神奇九转', '主力资金'].map(t => (
            <Chip key={t}>{t}<Lock /></Chip>
          ))}
          <Chip />
        </ChipList>
      </ChipRow>

      <TradeBar>
        <IndexBox>
          <Caret $up $mt={6} />
          <IndexValue>4101.91</IndexValue>
          <IndexSub>
            <Txt $s={34.5} $c={C.sub}>上证</Txt>
            <Txt $s={36} $c={C.downText} $ls={0.2}>-0.26%</Txt>
          </IndexSub>
        </IndexBox>
        <TradeBtn $bg={C.up}>买</TradeBtn>
        <TradeBtn $bg={C.blue}>卖</TradeBtn>
        <Action $w={127}>
          <svg width="60" height="60" viewBox="728 2151 60 60" fill="none" stroke={C.ink} strokeWidth="4.600" strokeLinecap="round" strokeLinejoin="round">
            <path d="M751.500 2156.500L733.500 2166L751.500 2176.500M734 2166H766a19.400 19.400 0 0 1 0 38.800H735" />
          </svg>
          撤单
        </Action>
        <Action $w={129}>
          <svg width="60" height="60" viewBox="856 2151 60 60" fill="none" strokeWidth="4.600" strokeLinecap="round">
            <path d="M911 2192.500A27.300 27.300 0 1 0 905.500 2200" stroke={C.ink} />
            <path d="M875.500 2181H896.500" stroke={C.blue} strokeWidth="4.800" />
          </svg>
          删自选
        </Action>
        <Action $w={130}>
          <svg width="60" height="60" viewBox="985 2151 60 60" fill="none" stroke={C.ink} strokeWidth="4.600" strokeLinecap="round">
            <rect x="990.500" y="2158.500" width="20.500" height="20.500" rx="5.500" />
            <rect x="1018" y="2185.500" width="20.500" height="20.500" rx="5.500" />
            <path d="M1009 2185.500H996a5.500 5.500 0 0 0-5.500 5.500v9.500a5.500 5.500 0 0 0 5.500 5.500h9.500a5.500 5.500 0 0 0 5.500-5.500V2193" />
            <rect x="1020.200" y="2159.200" width="16.600" height="16.600" rx="3" transform="rotate(45 1028.500 2167.500)" stroke={C.blue} />
          </svg>
          更多
        </Action>
      </TradeBar>

      <SysNav>
        <svg width="38" height="38" viewBox="0 0 38 38" stroke="#5c5c5c" strokeWidth="3">
          <path d="M1 2.500H37M1 19H37M1 35.500H37" />
        </svg>
        <svg width="38" height="38" viewBox="0 0 38 38" fill="none" stroke="#5c5c5c" strokeWidth="2.600">
          <rect x="2" y="2" width="34" height="34" rx="8" />
        </svg>
        <svg width="38" height="38" viewBox="0 0 38 38" fill="none" stroke="#5c5c5c" strokeWidth="2.400" strokeLinejoin="round">
          <path d="M34 4.500Q34 1.500 31 3.500L3.500 17Q1 19 3.500 21L31 34.500Q34 36.500 34 33.500z" />
        </svg>
      </SysNav>
    </Screen>
  );
}
